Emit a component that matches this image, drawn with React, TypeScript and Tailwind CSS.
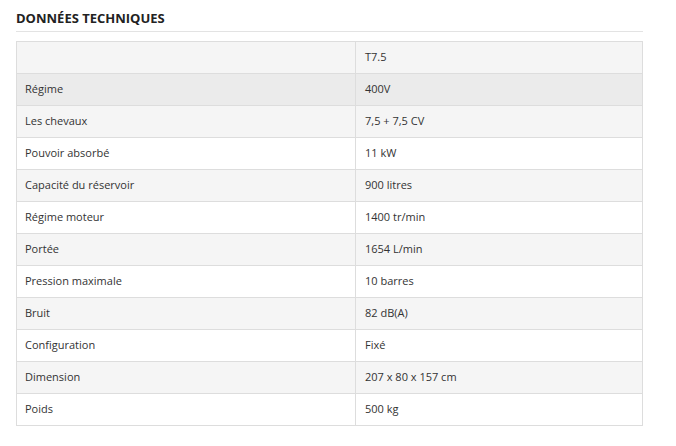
const rows: [string, string][] = [
  ["Régime", "400V"],
  ["Les chevaux", "7,5 + 7,5 CV"],
  ["Pouvoir absorbé", "11 kW"],
  ["Capacité du réservoir", "900 litres"],
  ["Régime moteur", "1400 tr/min"],
  ["Portée", "1654 L/min"],
  ["Pression maximale", "10 barres"],
  ["Bruit", "82 dB(A)"],
  ["Configuration", "Fixé"],
  ["Dimension", "207 x 80 x 157 cm"],
  ["Poids", "500 kg"],
];

export default function App() {
  return (
    <div
      className="w-[676px] h-[446px] bg-white px-4 pt-[9px] text-[#333]"
      style={{ fontFamily: '"Open Sans", sans-serif' }}
    >
      <h2 className="w-[627px] border-b border-[#e3e3e3] pb-[4px] text-[13px] leading-[18px] font-bold text-[#222]">
        DONNÉES TECHNIQUES
      </h2>
      <table className="mt-[9px] w-[627px] border-collapse text-[11px]">
        <tbody>
          <tr className="bg-[#f5f5f5]">
            <td className="h-[32px] w-[339px] border border-[#dddddd] px-2"></td>
            <td className="h-[32px] border border-[#dddddd] px-[9px]">T7.5</td>
          </tr>
          {rows.map(([label, value], i) => {
            // first data row is the hovered one in the shot
            const bg = i === 0 ? "bg-[#ebebeb]" : i % 2 === 1 ? "bg-[#f5f5f5]" : "bg-white";
            return (
              <tr key={label} className={bg}>
                <td className="h-[32px] border border-[#dddddd] px-2">{label}</td>
                <td className="h-[32px] border border-[#dddddd] px-[9px]">{value}</td>
              </tr>
            );
          })}
        </tbody>
      </table>
    </div>
  );
}
